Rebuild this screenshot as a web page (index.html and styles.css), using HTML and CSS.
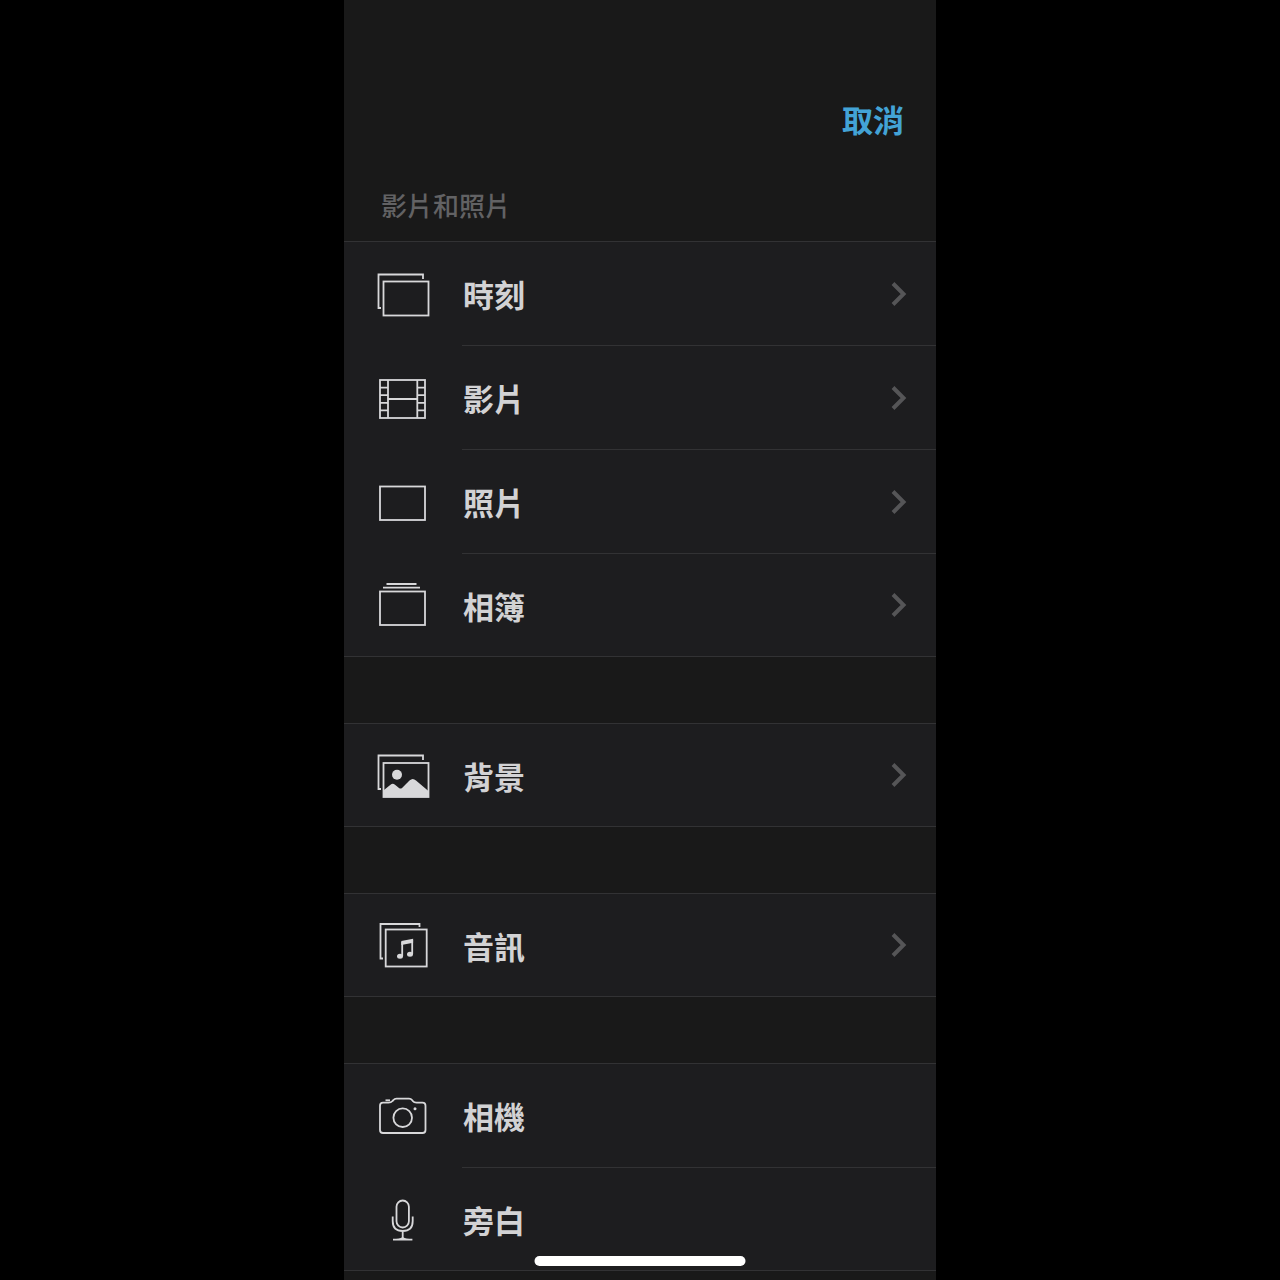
FILE: index.html
```html
<!DOCTYPE html>
<html lang="zh-Hant">
<head>
  <meta charset="UTF-8" />
  <meta name="viewport" content="width=device-width, initial-scale=1.0"/>
  <title>影片和照片</title>
  <link rel="stylesheet" href="styles.css">
</head>
<body>

<div class="screen">
  <header class="top-bar">
    <button class="cancel" type="button">取消</button>
    <h1 class="section-title">影片和照片</h1>
  </header>

  <main class="groups">
    <nav class="group">
      <a class="row" href="#moments">
        <svg class="icon" viewBox="0 0 60 56" aria-hidden="true">
          <path d="M51 13V8.5H6.5V42H9"/>
          <rect x="11.500" y="15.5" width="45" height="34"/>
        </svg>
        <span class="label">時刻
          <svg class="chevron" viewBox="0 0 16 24" aria-hidden="true"><path d="M2 1.5L12.500 12L2 22.5"/></svg>
        </span>
      </a>
      <a class="row" href="#videos">
        <svg class="icon" viewBox="0 0 60 56" aria-hidden="true">
          <rect x="8" y="10" width="45" height="38"/>
          <path d="M16 10V48M45.300 10V48M16 29H45.300M8 17.600H16M8 25.200H16M8 32.800H16M8 40.400H16M45.300 17.600H53M45.300 25.200H53M45.300 32.800H53M45.300 40.400H53"/>
        </svg>
        <span class="label">影片
          <svg class="chevron" viewBox="0 0 16 24" aria-hidden="true"><path d="M2 1.5L12.500 12L2 22.5"/></svg>
        </span>
      </a>
      <a class="row" href="#photos">
        <svg class="icon" viewBox="0 0 60 56" aria-hidden="true">
          <rect x="8" y="12.500" width="45" height="33.500"/>
        </svg>
        <span class="label">照片
          <svg class="chevron" viewBox="0 0 16 24" aria-hidden="true"><path d="M2 1.5L12.500 12L2 22.5"/></svg>
        </span>
      </a>
      <a class="row" href="#albums">
        <svg class="icon" viewBox="0 0 60 56" aria-hidden="true">
          <rect x="8" y="14.500" width="45" height="33.500"/>
          <path d="M11 10.700H48M14.500 7H44.500"/>
        </svg>
        <span class="label">相簿
          <svg class="chevron" viewBox="0 0 16 24" aria-hidden="true"><path d="M2 1.5L12.500 12L2 22.5"/></svg>
        </span>
      </a>
    </nav>

    <nav class="group">
      <a class="row" href="#backgrounds">
        <svg class="icon" viewBox="0 0 60 56" aria-hidden="true">
          <path d="M51 13V8.5H6.5V42H9"/>
          <rect x="11.500" y="16" width="45" height="34"/>
          <circle class="solid" cx="25" cy="27.700" r="5"/>
          <path class="solid" d="M12 43L18.500 37.700Q20.700 36 23 37.700L27 41Q28.500 42 30 41L37.500 33.500Q40.700 30.500 44 33.500L57 44.500V50H12Z"/>
        </svg>
        <span class="label">背景
          <svg class="chevron" viewBox="0 0 16 24" aria-hidden="true"><path d="M2 1.5L12.500 12L2 22.5"/></svg>
        </span>
      </a>
    </nav>

    <nav class="group">
      <a class="row" href="#audio">
        <svg class="icon" viewBox="0 0 60 56" aria-hidden="true">
          <path d="M47.500 10V7H8.500V41.500H11"/>
          <rect x="13.700" y="12.500" width="41" height="37"/>
          <path d="M30.200 39V25M40.200 37V23"/>
          <path class="solid" d="M29.300 24L41.100 21.800V25.800L29.300 28Z"/>
          <ellipse class="solid" cx="28" cy="39.200" rx="3" ry="2.500"/>
          <ellipse class="solid" cx="38" cy="37.200" rx="3" ry="2.500"/>
        </svg>
        <span class="label">音訊
          <svg class="chevron" viewBox="0 0 16 24" aria-hidden="true"><path d="M2 1.5L12.500 12L2 22.5"/></svg>
        </span>
      </a>
    </nav>

    <nav class="group">
      <a class="row" href="#camera">
        <svg class="icon" viewBox="0 0 60 56" aria-hidden="true">
          <path d="M11 14.700H16.500Q19 14.700 20.500 13L21.500 12Q22.500 10.700 24.500 10.700H37Q39 10.700 40 12L41 13.300Q42 14.700 44.500 14.700H50.500Q53.500 14.700 53.500 17.700V42Q53.500 45 50.500 45H11Q8 45 8 42V17.700Q8 14.700 11 14.700Z"/>
          <circle cx="30.700" cy="29.700" r="9.300"/>
          <circle class="solid" cx="43" cy="20.700" r="1.500"/>
          <path d="M13.500 12.300H18"/>
        </svg>
        <span class="label">相機</span>
      </a>
      <a class="row" href="#voiceover">
        <svg class="icon" viewBox="0 0 60 56" aria-hidden="true">
          <rect x="24.500" y="9.500" width="12.400" height="27" rx="6.200"/>
          <path d="M20.700 25.500V30Q20.700 40 30.700 40Q40.700 40 40.700 30V25.500M30.700 40V48.700"/>
          <path d="M21 48.700Q28 48.700 30.700 47Q33.400 48.700 40.400 48.700Z"/>
        </svg>
        <span class="label">旁白</span>
      </a>
    </nav>
  </main>
</div>

<div class="home-indicator"></div>

</body>
</html>
```

FILE: styles.css
```css
* {
  box-sizing: border-box;
}
body {
  margin: 0;
  background: #000;
  color: #d2d2d4;
  font-family: "Noto Sans CJK TC", sans-serif;
}
.screen {
  max-width: 592px;
  min-height: 100vh;
  margin: 0 auto;
  background: #191919;
}
.top-bar {
  display: flex;
  flex-direction: column;
  padding: 95px 32px 16px 37px;
}
.cancel {
  align-self: flex-end;
  padding: 0;
  border: none;
  background: none;
  color: #43a3d6;
  font-family: inherit;
  font-size: 31px;
  font-weight: 700;
  line-height: 48px;
  cursor: pointer;
}
.section-title {
  margin: 42px 0 0;
  color: #626264;
  font-size: 26px;
  font-weight: 500;
  line-height: 40px;
}
.groups {
  display: flex;
  flex-direction: column;
  gap: 66px;
}
.group {
  border-top: 1px solid #323234;
  border-bottom: 1px solid #323234;
  background: #1d1d1f;
}
.row {
  display: flex;
  height: 104px;
  padding-left: 28px;
  align-items: center;
  color: inherit;
  text-decoration: none;
}
.row:last-child {
  height: 102px;
}
.icon {
  width: 60px;
  height: 56px;
  margin-right: 30px;
  flex-shrink: 0;
}
.icon * {
  fill: none;
  stroke: #d8d8da;
  stroke-width: 1.8;
}
.icon .solid {
  fill: #d8d8da;
  stroke: none;
}
.label {
  display: flex;
  flex: 1;
  height: 100%;
  padding: 0 29px 0 1px;
  align-items: center;
  justify-content: space-between;
  border-bottom: 1px solid #323234;
  font-size: 31px;
  font-weight: 700;
}
.row:last-child .label {
  border-bottom: none;
}
.chevron {
  width: 16px;
  height: 24px;
}
.chevron path {
  fill: none;
  stroke: #555557;
  stroke-width: 4;
}
.home-indicator {
  position: fixed;
  bottom: 14px;
  left: 50%;
  width: 211px;
  height: 10px;
  border-radius: 5px;
  background: #fff;
  transform: translateX(-50%);
}
```
